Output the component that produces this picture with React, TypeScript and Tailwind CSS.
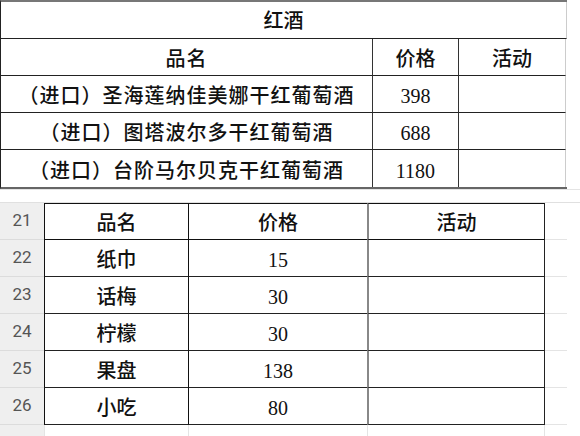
const serif = "font-['Liberation_Serif','Noto_Sans_CJK_SC',serif]";

const wines = [
  { name: '（进口）圣海莲纳佳美娜干红葡萄酒', price: '398' },
  { name: '（进口）图塔波尔多干红葡萄酒', price: '688' },
  { name: '（进口）台阶马尔贝克干红葡萄酒', price: '1180' },
];

const snacks = [
  { row: 22, name: '纸巾', price: '15' },
  { row: 23, name: '话梅', price: '30' },
  { row: 24, name: '柠檬', price: '30' },
  { row: 25, name: '果盘', price: '138' },
  { row: 26, name: '小吃', price: '80' },
];

function RowNum({ n }: { n: number | string }) {
  return (
    <div className="h-[37px] bg-[#efefef] border-b border-[#dcdcdc] flex items-center justify-center text-[17px] text-[#555] font-['Roboto','Liberation_Sans',sans-serif]">
      {n}
    </div>
  );
}

export default function App() {
  return (
    <div className={`w-[580px] h-[436px] bg-white overflow-hidden text-[#111] ${serif}`}>
      {/* 红酒 表格（截图） */}
      <div className="w-[567px] border-t-2 border-[#777] border-l-[1.5px] border-l-[#222] border-b-2 border-b-[#666]">
        <div className="h-[37px] pt-[2px] border-b-[1.5px] border-[#222] border-r border-r-[#ccc] flex items-center justify-center text-[20px] font-medium">
          红酒
        </div>
        <div className="grid grid-cols-[372px_86px_107px]">
          {[{ name: '品名', price: '价格' }, ...wines].map((w, i) => (
            <div key={i} className="contents">
              <div className={`h-[37px] pt-[4px] flex items-center justify-center text-[20px] font-medium tracking-[1px] border-r border-[#333] ${i < 3 ? 'border-b-[1.5px] border-b-[#222]' : ''}`}>
                {w.name}
              </div>
              <div className={`h-[37px] pt-[4px] flex items-center justify-center text-[20px] font-medium border-r border-[#333] ${i < 3 ? 'border-b-[1.5px] border-b-[#222]' : ''}`}>
                {w.price}
              </div>
              <div className={`h-[37px] pt-[4px] flex items-center justify-center text-[20px] font-medium border-r border-[#ccc] ${i < 3 ? 'border-b-[1.5px] border-b-[#222]' : ''}`}>
                {i === 0 ? '活动' : ''}
              </div>
            </div>
          ))}
        </div>
      </div>
      <div className="h-[13px] border-t border-[#e4e4e4]" />

      {/* 表格区域 */}
      <div className="grid grid-cols-[44px_144px_179px_178px_22px] border-t border-[#e0e0e0]">
        <RowNum n={21} />
        <div className="h-[37px] pt-[3px] border-t-[1.5px] border-b border-[#111] border-l border-l-[#111] flex items-center justify-center text-[20px] font-medium">品名</div>
        <div className="h-[37px] pt-[3px] border-t-[1.5px] border-b border-[#111] border-l border-l-[#111] flex items-center justify-center text-[20px] font-medium">价格</div>
        <div className="h-[37px] pt-[3px] border-t-[1.5px] border-b border-[#111] border-l-2 border-l-[#888] border-r-[1.5px] border-r-[#222] flex items-center justify-center text-[20px] font-medium">活动</div>
        <div className="h-[37px] border-b border-[#e4e4e4]" />
        {snacks.map((s) => (
          <div key={s.row} className="contents">
            <RowNum n={s.row} />
            <div className="h-[37px] pt-[3px] border-b-[1.5px] border-[#222] border-l border-l-[#111] flex items-center justify-center text-[20px] font-medium">{s.name}</div>
            <div className="h-[37px] pt-[3px] border-b-[1.5px] border-[#222] border-l border-l-[#111] flex items-center justify-center text-[20px] font-medium">{s.price}</div>
            <div className="h-[37px] border-b-[1.5px] border-[#222] border-l-2 border-l-[#888] border-r-[1.5px] border-r-[#222]" />
            <div className="h-[37px] border-b border-[#e4e4e4]" />
          </div>
        ))}
        <RowNum n={27} />
        <div className="h-[37px] border-l border-[#e4e4e4]" />
        <div className="h-[37px] border-l border-[#e4e4e4]" />
        <div className="h-[37px] border-l border-[#e4e4e4] border-r border-r-[#e4e4e4]" />
        <div className="h-[37px]" />
      </div>
    </div>
  );
}
